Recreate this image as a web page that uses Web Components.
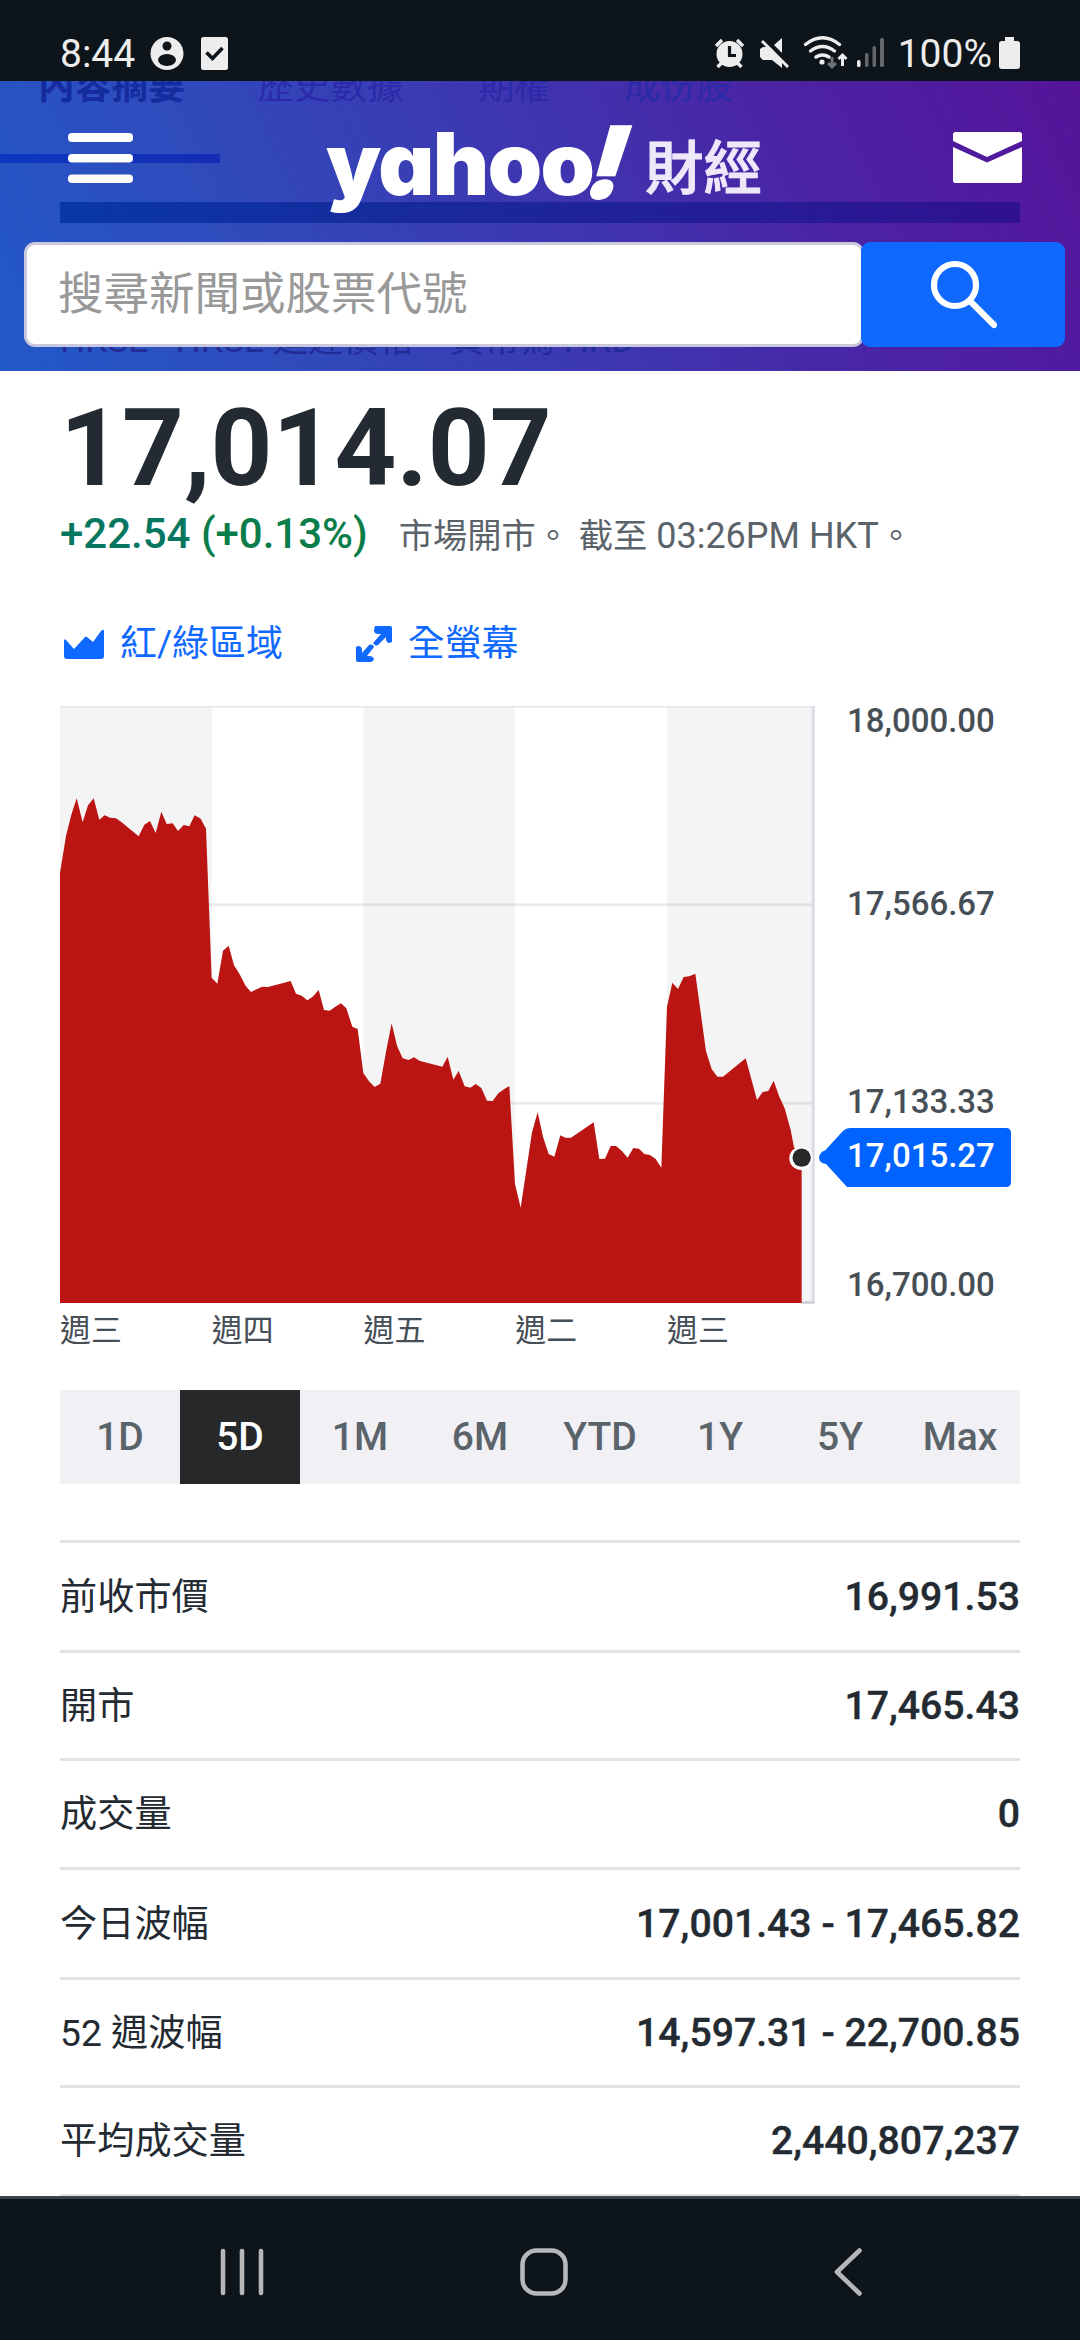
<!DOCTYPE html>
<html lang="zh-Hant">
<head>
<meta charset="utf-8">
<title>Yahoo 財經</title>
<style>
html,body{margin:0;padding:0;background:#fff}
body{font-family:Roboto,"Noto Sans CJK TC",sans-serif;color:#232a31}
</style>
</head>
<body>
<finance-app></finance-app>
<script>
function define(name, html, setup){
  const t=document.createElement('template');
  t.innerHTML=html;
  customElements.define(name, class extends HTMLElement{
    constructor(){super();this.attachShadow({mode:'open'}).append(t.content.cloneNode(true));}
    connectedCallback(){if(setup)setup(this,this.shadowRoot);}
  });
}

define('status-bar',`<style>
:host{display:flex;box-sizing:border-box;height:81px;padding:0 59px 0 60px;background:#0d141a;color:#ededed;font-size:39px;line-height:50px;justify-content:space-between;overflow:hidden}
div{display:flex;height:81px}svg{display:block}
span{margin-top:29px;height:50px}
.l svg{margin-left:15px}
</style>
<div class="l"><span>8:44</span>
<svg width="80" height="81" viewBox="150 0 80 81"><circle cx="167" cy="53.5" r="16.5" fill="#ededed"/><circle cx="167" cy="46" r="4.5" fill="#0d141a"/><ellipse cx="167" cy="60" rx="9" ry="6" fill="#0d141a"/><rect x="201" y="37" width="27" height="33" rx="2.5" fill="#ededed"/><path d="M206.500 52.500l6 6 10-10.500" fill="none" stroke="#0d141a" stroke-width="3.600"/></svg></div>
<div class="r"><svg width="185" height="81" viewBox="713 0 185 81" fill="#ededed" stroke="none">
<circle cx="729.500" cy="54" r="13"/><path d="M729.500 46v9.500h6.500" fill="none" stroke="#0d141a" stroke-width="3.200"/><path d="M716 46l6-6M743 46l-6-6M717.500 67l4-4M741.500 67l-4-4" stroke="#ededed" stroke-width="3.400" fill="none"/>
<path d="M760 49l3-2h7l12 13v8l-10-8h-9l-3-3zM774 45l8-7v15z"/><path d="M762 41l26 26" stroke="#ededed" stroke-width="3" fill="none"/>
<g fill="none" stroke="#ededed" stroke-width="3.400" stroke-linecap="round"><path d="M805.500 44.500q17-13.500 34 0M810.500 51q12-9 24 0M816 57q6.500-4 13 0"/></g><circle cx="822" cy="62" r="2.600"/><path d="M832 57v10m-4-4l4 4 4-4" fill="none" stroke="#6c7276" stroke-width="3"/><path d="M842.500 66V55m-4 4l4-4 4 4" fill="none" stroke="#ededed" stroke-width="3"/>
<rect x="857" y="60" width="3.500" height="7" rx="1.500"/><g fill="#62686c"><rect x="865" y="53" width="3.500" height="14" rx="1.500"/><rect x="872.500" y="46" width="3.500" height="21" rx="1.500"/><rect x="880" y="38" width="4" height="29" rx="1.500"/></g></svg>
<span>100%</span><svg style="margin-left:7px" width="22" height="81" viewBox="0 0 22 81"><path d="M6 37h9v4h3q3 0 3 3v22q0 3-3 3H3q-3 0-3-3V44q0-3 3-3h3z" fill="#ededed"/></svg></div>`);

define('brand-logo',`<style>
:host{display:flex;align-items:flex-start;height:90px;color:#fff;white-space:nowrap}
.y{font:900 87px/92px Inter,sans-serif;font-feature-settings:"cv11";letter-spacing:-1.600px;width:265px}
.y b{font-weight:900;display:block;width:max-content}
.e{font:900 99px/89px Inter,sans-serif;width:48px;transform:skewX(-17deg);-webkit-text-stroke:1.500px #fff}
.c{font:500 58.500px/92px "Noto Sans CJK TC",sans-serif;color:#eee8fb;margin-left:6px;-webkit-text-stroke:.9px #eee8fb}
</style><span class="y"><b>yahoo</b></span><span class="e">!</span><span class="c">財經</span>`);

define('search-box',`<style>
:host{display:flex;height:105px;margin:0 15px 0 24px}
.f{box-sizing:border-box;width:840px;border:3px solid #c9c8dc;border-radius:11px;background:#fff;color:#999;font-size:45.500px;line-height:99px;padding-left:31px}
button{all:unset;display:flex;align-items:center;justify-content:center;width:204px;margin-left:-3px;background:#0f69ff;border-radius:9px}
</style><div class="f"><slot></slot></div><button><svg width="68" height="72" viewBox="928 260 68 72" fill="none" stroke="#fff" stroke-width="6.200" stroke-linecap="round"><circle cx="954" cy="286" r="21"/><path d="M969.500 302.500L993 326"/></svg></button>`);

define('site-header',`<style>
:host{display:block;position:relative;height:290px;overflow:hidden;background:linear-gradient(65deg,#2259c8 0%,#2f4bbc 24%,#3e36b0 52%,#4b23a3 75%,#55149a 100%)}
.under{position:absolute;inset:0;z-index:0;color:#2b2aa8;font-size:36.300px;white-space:nowrap}
.under span{position:absolute;top:-14px;line-height:40px}
.under .on{font-weight:700;color:#152c9f;font-size:36.800px}
.under .q{top:239px;font-size:35.300px;color:#222c99}
.under i{position:absolute;display:block}
.row{position:relative;z-index:1;display:flex;height:161px;align-items:flex-start}
search-box{position:relative;z-index:1}
.m{margin:52px 0 0 68px;width:65px}.mail{margin:51px 0 0 191px}
brand-logo{margin:37px 0 0 193px;width:436px}
svg{display:block;flex:none}
</style>
<div class="under"><span class="on" style="left:38px">內容摘要</span><span style="left:258px">歷史數據</span><span style="left:478px">期權</span><span style="left:624px">成份股</span>
<i style="left:0;top:73px;width:220px;height:9px;background:linear-gradient(90deg,#0b39c0,#152db4)"></i>
<i style="left:60px;top:121px;width:960px;height:21px;background:linear-gradient(90deg,#0838a6,#1b279b 45%,#301190)"></i>
<span class="q" style="left:60px">HKSE - HKSE 延遲價格。貨幣為 HKD</span></div>
<div class="row"><svg class="m" width="65" height="50" fill="#fff"><rect width="65" height="9" rx="4"/><rect y="21" width="65" height="8.500" rx="4"/><rect y="41.500" width="65" height="8.500" rx="4"/></svg>
<brand-logo></brand-logo>
<svg class="mail" width="69" height="51" viewBox="0 0 69 51" fill="#fff"><path d="M0 9V2.500Q0 0 2.500 0h64Q69 0 69 2.500V9L34 25zM0 15l34 15.500L69 15v33.500q0 2.500-2.500 2.500h-64Q0 51 0 48.500z"/></svg></div>
<search-box>搜尋新聞或股票代號</search-box>`);

define('quote-price',`<style>
:host{display:block;padding-top:17px}
.p{font-weight:700;font-size:108px;line-height:120px}
.c{display:flex;align-items:baseline;height:51px;font-size:42px;line-height:51px;font-weight:500;color:#0b7d4b;white-space:pre}
.c b{font-weight:500;color:#05765f}
.s{margin-left:31px;font-size:34.300px;font-weight:400;color:#5b636a;white-space:pre}
.s i{font-style:normal;font-size:36px}
</style><div class="p">17,014.07</div><div class="c"><span><b>+22.54</b> (+0.13%)</span><span class="s">市場開市。 截至<i> 03:26PM HKT</i>。</span></div>`);

define('chart-tools',`<style>
:host{display:flex;margin-top:60px;height:50px;line-height:50px;font-size:36.900px;color:#0f69ff}
svg{display:block}
.a{margin-left:4px}.b{margin-left:73px}span{margin-left:16px}
</style><svg class="a" width="40" height="50" fill="#0f69ff"><path d="M0 22q0-3 2-1l8 9 11-12q1-1 2 0l6 5 8-11q1-1.500 3-1v26q0 3-3 3H3q-3 0-3-3z"/></svg><span>紅/綠區域</span>
<svg class="b" width="36" height="50" viewBox="0 0 36 50" fill="#0f69ff"><path d="M19 7h15q2 0 2 2v14l-3 1q-3-1-3-4v-2l-8 8q-2 1-3 0l-2-2 8-9h-3q-4 0-4-4zM2 27q4 0 4 4v3l7-8q2-1 4 0l1 2-7 9h2q4 0 5 3-1 3-3 3H2q-2 0-2-2V28z"/></svg><span>全螢幕</span>`);

define('price-chart',`<style>
:host{display:block;margin-top:37px}
svg{display:block;overflow:visible}
text{font:500 33px Roboto,sans-serif;fill:#464e56}
.x{display:flex;margin-top:7px;height:40px;line-height:40px;font-size:30.900px;color:#464e56}.x span{width:151.750px}
</style>
<svg width="960" height="598" viewBox="0 0 960 598">
<path fill="#f4f4f4" d="M0 0h151.700v597H0zM303.300 0H455v597H303.300zM607 0h146v597H607z"/>
<path stroke="#000" stroke-opacity=".07" stroke-width="3" d="M0 198.700h753M0 397.300h753"/><path stroke="#e4e5e6" stroke-width="1.500" d="M0 .7h753"/>
<path stroke="#d9dce4" stroke-width="3" d="M753.300 0v597"/><path stroke="#cbcdd2" stroke-width="2.500" d="M741 596.500h13.500"/>
<g transform="translate(-20 -16) scale(.333333)"><polygon fill="#bb1513" points="60,548 78,438 94,374 110,325 128,397 144,346 161,325 178,389 194,376 210,383 228,385 245,397 296,439 313,404 330,393 347,429 364,365 380,402 398,400 414,423 431,405 448,409 464,376 482,386 498,416 515,863 532,881 549,782 566,767 582,826 599,853 617,888 633,906 666,890 684,891 752,873 768,911 785,917 802,931 818,920 836,900 852,960 869,962 886,950 903,940 919,955 937,1010 953,1017 970,1149 987,1174 1004,1191 1021,1181 1038,1085 1055,1000 1071,1067 1088,1105 1106,1110 1122,1102 1138,1112 1207,1130 1223,1100 1240,1169 1256,1143 1274,1189 1291,1193 1307,1182 1324,1194 1341,1232 1358,1233 1375,1210 1392,1198 1408,1188 1425,1482 1442,1553 1459,1440 1476,1327 1493,1267 1509,1340 1526,1392 1543,1400 1561,1336 1576,1343 1593,1343 1661,1297 1678,1407 1695,1406 1712,1368 1728,1368 1745,1382 1763,1403 1780,1374 1797,1376 1813,1392 1830,1395 1847,1407 1864,1433 1881,950 1897,878 1914,897 1931,861 1948,859 1966,851 1982,967 1998,1084 2015,1137 2032,1160 2049,1160 2117,1105 2151,1230 2168,1206 2185,1203 2201,1172 2217,1218 2234,1255 2252,1320 2262,1372 2285,1403 2285,1839 60,1839"/>
<circle cx="2283" cy="1405" r="35" fill="#fff"/><circle cx="2285" cy="1403" r="27.500" fill="#26282a"/></g>
<path fill="#0063ff" d="M761 447q1-2 4-2.500L783 425q3-3 7-3h156q5 0 5 5v49q0 5-5 5H787L766 458q-7-1-7-6.500 0-2 2-4.500z"/>
<text x="787" y="26">18,000.00</text><text x="787" y="209">17,566.67</text><text x="787" y="406.500">17,133.33</text><text x="787" y="460.500" style="fill:#fff">17,015.27</text><text x="787" y="589.500">16,700.00</text>
</svg><div class="x"><span>週三</span><span>週四</span><span>週五</span><span>週二</span><span>週三</span></div>`);

define('range-tab',`<style>
:host{flex:1;text-align:center;font-weight:500;font-size:39px;line-height:94px;color:#5b636a}
:host([active]){background:#26282a;color:#fff}
</style><slot></slot>`);
define('range-tabs',`<style>:host{display:flex;margin-top:39px;height:94px;background:#f0f0f5}</style><slot></slot>`);

define('stat-row',`<style>
:host{display:flex;box-sizing:border-box;height:109px;border-top:3px solid #e0e4e9;justify-content:space-between;align-items:center;font-size:37.200px;line-height:60px}
span,b{height:60px}
b{font-weight:500;font-size:39.200px;-webkit-text-stroke:.4px #232a31}
</style><span></span><b><slot></slot></b>`,(h,s)=>{s.querySelector('span').textContent=h.getAttribute('label');});

define('nav-bar',`<style>
:host{display:block;position:relative;box-sizing:border-box;height:144px;border-top:3px solid #3a444c;background:#0d141a}svg{display:block}
</style><svg width="1080" height="141" viewBox="0 2199 1080 141" fill="none" stroke="#b5b7b9" stroke-width="4.600" stroke-linecap="round" stroke-linejoin="round"><path d="M223 2251v42M242 2251v42M261 2251v42M859.500 2250.500L837 2272l22.500 21.500"/><rect x="522.500" y="2250.500" width="43" height="43" rx="14"/></svg>`);

define('finance-app',`<style>
:host{display:flex;flex-direction:column;width:1080px;height:2340px;overflow:hidden;background:#fff}
main{display:block;height:1825px;padding:0 60px;overflow:hidden}
.st{margin-top:56px}
</style><status-bar></status-bar><site-header></site-header>
<main><quote-price></quote-price><chart-tools></chart-tools><price-chart></price-chart>
<range-tabs><range-tab>1D</range-tab><range-tab active>5D</range-tab><range-tab>1M</range-tab><range-tab>6M</range-tab><range-tab>YTD</range-tab><range-tab>1Y</range-tab><range-tab>5Y</range-tab><range-tab>Max</range-tab></range-tabs>
<div class="st"><stat-row label="前收市價" style="height:110px">16,991.53</stat-row><stat-row label="開市" style="height:108px">17,465.43</stat-row><stat-row label="成交量">0</stat-row><stat-row label="今日波幅" style="height:110px">17,001.43 - 17,465.82</stat-row><stat-row label="52 週波幅" style="height:108px">14,597.31 - 22,700.85</stat-row><stat-row label="平均成交量">2,440,807,237</stat-row><stat-row label=""></stat-row></div></main>
<nav-bar></nav-bar>`);
</script>
</body>
</html>
